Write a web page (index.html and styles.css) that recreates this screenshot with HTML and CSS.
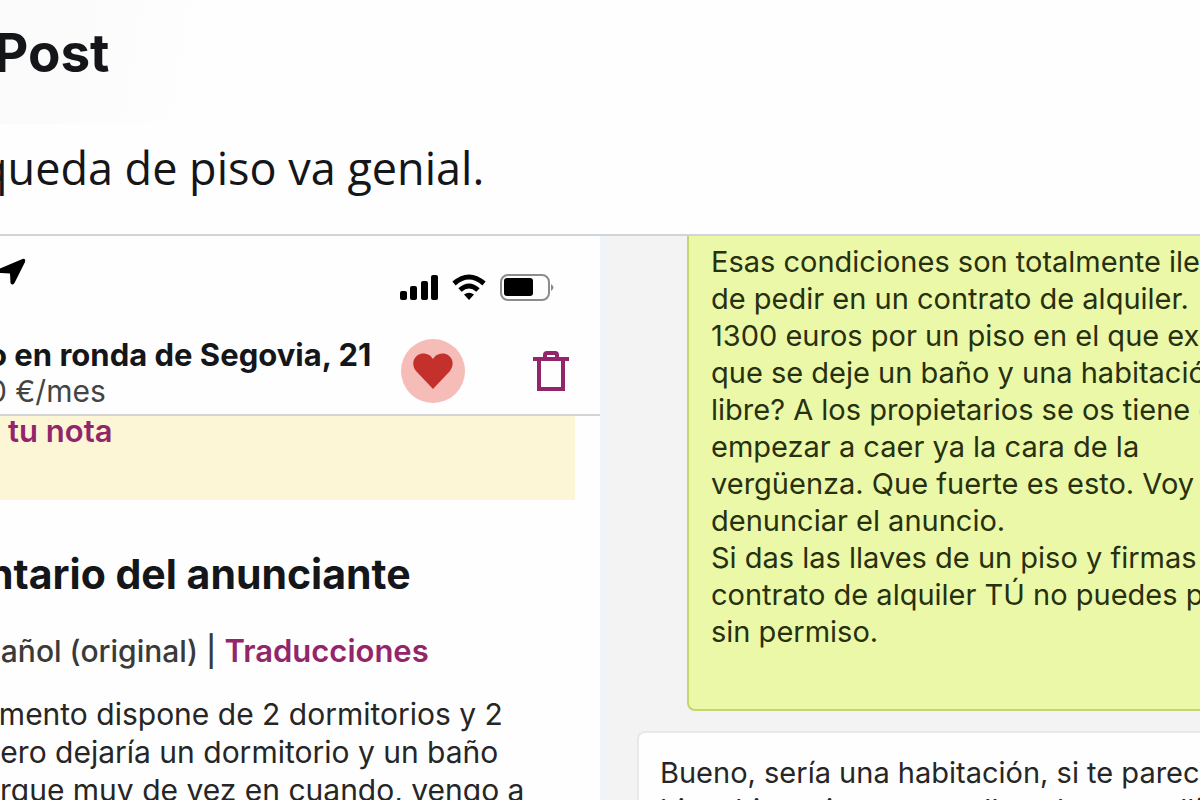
FILE: index.html
```html
<!DOCTYPE html>
<html lang="es">
<head>
    <meta charset="UTF-8">
    <title>Post</title>
    <link rel="stylesheet" href="styles.css">
</head>
<body>
<header class="header">
    <h1>Post</h1>
</header>
<p class="tweet">queda de piso va genial.</p>
<main class="photos">
    <section class="photo listing">
        <div class="status">
            <svg class="arrow" width="26" height="28" viewBox="0 0 26 28"><path d="M22.500 1 L-1 11 Q-3 15 1 15 L10 15.500 L10.500 25 Q12 28 14.500 25 L25 4 Q26 0 22.500 1Z"/></svg>
            <svg width="156" height="28" viewBox="0 0 156 28">
                <rect x="1" y="17" width="7" height="9" rx="2"/>
                <rect x="11" y="12" width="7" height="14" rx="2"/>
                <rect x="22" y="7" width="7" height="19" rx="2"/>
                <rect x="32" y="1" width="7" height="25" rx="2"/>
                <g fill="none" stroke="#000" stroke-width="5">
                    <path d="M55 9.500 Q70 -3.500 85 9.500"/>
                    <path d="M61 16 Q70 8 79 16"/>
                </g>
                <path d="M65 20.500 Q70 17 75 20.500 L70 26Z"/>
                <rect x="102" y="1" width="48" height="25" rx="7" fill="none" stroke="#8c8c8c" stroke-width="2"/>
                <rect x="105" y="4" width="29" height="18" rx="3"/>
                <path d="M152 10 Q157 13.500 152 17Z" fill="#8c8c8c"/>
            </svg>
        </div>
        <div class="title-bar">
            <div class="title">
                <h2>o en ronda de Segovia, 21</h2>
                <p>0 €/mes</p>
            </div>
            <button class="icon-btn fav" aria-label="Favorito">
                <svg width="64" height="64" viewBox="0 0 64 64"><circle cx="32" cy="32" r="32" fill="#f6bdb8"/><path d="M32 50 L15 32 C8 22 16 14 23 14.500 C28 15 30 17 32 20 C34 17 36 15 41 14.500 C48 14 56 22 49 32Z" fill="#c4302b"/></svg>
            </button>
            <button class="icon-btn" aria-label="Eliminar">
                <svg width="36" height="42" viewBox="0 0 36 42" fill="none" stroke="#93266b" stroke-width="4"><path d="M6 9V39H30V9M0 9H36M12 8V5Q12 3 14 3H22Q24 3 24 5V8"/></svg>
            </button>
        </div>
        <div class="note"><a href="#">r tu nota</a></div>
        <h3>ntario del anunciante</h3>
        <p class="langs">pañol (original) | <a href="#">Traducciones</a></p>
        <p class="description">amento dispone de 2 dormitorios y 2<br>pero dejaría un dormitorio y un baño<br>orque muy de vez en cuando, vengo a</p>
    </section>
    <section class="photo chat">
        <p class="message sent">Esas condiciones son totalmente ilegales<br>de pedir en un contrato de alquiler.<br>1300 euros por un piso en el que exiges<br>que se deje un baño y una habitación<br>libre? A los propietarios se os tiene que<br>empezar a caer ya la cara de la<br>vergüenza. Que fuerte es esto. Voy a<br>denunciar el anuncio.<br>Si das las llaves de un piso y firmas un<br>contrato de alquiler TÚ no puedes pasar<br>sin permiso.</p>
        <p class="message received">Bueno, sería una habitación, si te parece<br>bien, bien, si no, pues ella te buscas allí</p>
    </section>
</main>
</body>
</html>
```
FILE: styles.css
```css
* {
    box-sizing: border-box;
}

body {
    margin: 0;
    height: 100vh;
    overflow: hidden;
    display: flex;
    flex-direction: column;
    background: #fefefe;
    color: #141619;
    font-family: Inter, "Liberation Sans", sans-serif;
    font-size: 30px;
    white-space: nowrap;
}

h1, h2, h3, p {
    margin: 0;
}

a {
    color: #93266b;
    font-weight: 600;
    text-decoration: none;
}

.header {
    height: 124px;
    padding-top: 20px;
    background: linear-gradient(100deg, #fafafa, #fefefe 210px);
}

h1 {
    margin-left: -6px;
    font-size: 53px;
    line-height: 66px;
    font-weight: 700;
}

.tweet {
    height: 110px;
    padding-top: 12px;
    margin-left: -20px;
    font-family: "Open Sans", sans-serif;
    font-size: 45px;
    line-height: 64px;
}

.photos {
    flex: 1;
    min-height: 0;
    display: flex;
    gap: 8px;
    border-top: 2px solid #d0d5da;
    background: #f0f3f7;
}

.photo {
    overflow: hidden;
}

.listing {
    flex: 0 0 50%;
    background: #fefefe;
}

.status {
    display: flex;
    justify-content: space-between;
    height: 92px;
    padding: 22px 45px 0 0;
}

.status svg {
    margin-top: 16px;
}

.status .arrow {
    margin-top: 0;
}

.title-bar {
    display: flex;
    align-items: center;
    height: 88px;
    padding-right: 31px;
    border-bottom: 2px solid #d4d4d4;
}

.title {
    flex: 1;
    margin-left: -12px;
    padding-top: 4px;
}

.title h2 {
    font-size: 31px;
    line-height: 36px;
}

.title p {
    color: #444;
    line-height: 36px;
}

.icon-btn {
    display: flex;
    padding: 0;
    border: 0;
    background: none;
}

.fav {
    margin-right: 68px;
}

.note {
    height: 84px;
    margin-right: 25px;
    background: #fdf6d6;
    font-size: 31px;
    line-height: 30px;
}

.note a {
    margin-left: -12px;
}

h3 {
    margin: 50px 0 0 -12px;
    font-size: 41px;
    line-height: 48px;
}

.langs {
    margin: 35px 0 0 -18px;
    color: #3a3a3a;
    font-weight: 500;
    line-height: 36px;
}

.langs a {
    font-size: 31px;
}

.description {
    margin: 26px 0 0 -18px;
    color: #262626;
    line-height: 38px;
}

.chat {
    flex: 1;
    min-width: 0;
    background: #f2f3f2;
}

.message {
    font-size: 29px;
    line-height: 37px;
    color: #262626;
}

.sent {
    margin-left: 79px;
    padding: 7px 0 59px 22px;
    border: 2px solid #c3d66f;
    border-width: 0 0 2px 2px;
    border-radius: 0 0 0 8px;
    background: #ebf8a8;
    color: #27300f;
}

.received {
    margin: 20px 0 0 29px;
    padding: 21px 0 21px 21px;
    border: 2px solid #e8e8e8;
    border-right: 0;
    border-radius: 8px 0 0 0;
    background: #fefefe;
}
```
